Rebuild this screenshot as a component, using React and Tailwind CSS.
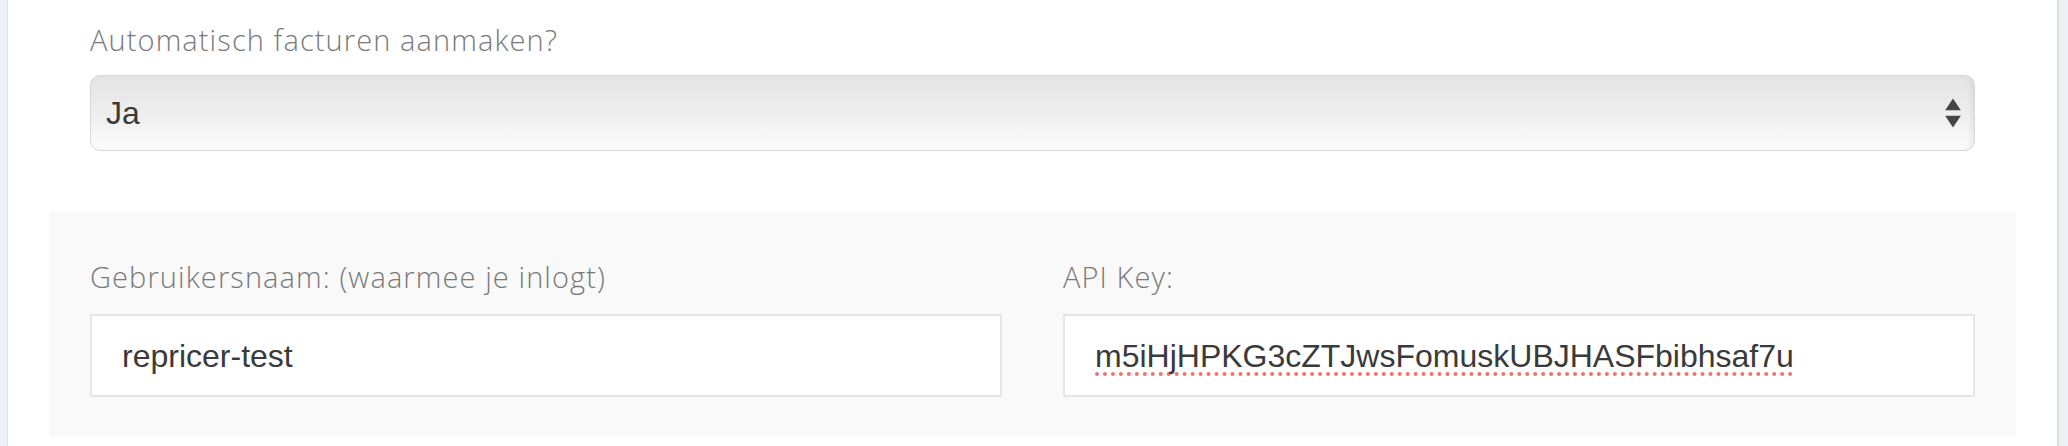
import React from 'react';

const labelCls =
  "h-[40px] leading-[40px] text-[29px] font-light text-[#7a7a7a] tracking-[1.1px] [font-family:'Open_Sans',Lato,sans-serif]";

function Field({ label, value, spell }) {
  return (
    <div className="flex flex-col">
      <label className={`${labelCls} mb-[17px]`}>{label}</label>
      <div className="h-[83px] border-2 border-[#e6e6e6] bg-white flex items-center pl-[30px]">
        <span
          className={`text-[32px] text-[#3a3a3a] [font-family:'Liberation_Sans',Arial,sans-serif] ${
            spell
              ? 'underline decoration-dotted decoration-[#f0736a] decoration-[4px] underline-offset-[6px] [text-decoration-skip-ink:none]'
              : ''
          }`}
        >
          {value}
        </span>
      </div>
    </div>
  );
}

export default function App() {
  return (
    <div className="w-[2068px] h-[446px] flex bg-white overflow-hidden">
      {/* linker rand */}
      <div className="w-[8px] bg-[#edf1f5] border-r border-[#dde3e9]" />

      <div className="flex-1 px-[41px] pt-[20px]">
        <div className="px-[41px]">
          <div className={`${labelCls} mb-[15px]`}>Automatisch facturen aanmaken?</div>

          <div className="relative h-[76px] rounded-[10px] border border-[#d8d8d8] bg-gradient-to-b from-[#e4e4e4] via-[#eeeeee] to-[#fcfcfc] shadow-[inset_-6px_0_6px_-4px_rgba(0,0,0,0.08)] flex items-center pl-[15px]">
            <span className="text-[32px] text-[#3a3a3a] [font-family:'Liberation_Sans',Arial,sans-serif]">Ja</span>
            <div className="absolute right-[13px] top-1/2 -translate-y-1/2 flex flex-col items-center gap-[5px]">
              <svg width="16" height="12" viewBox="0 0 16 12">
                <path d="M8 0 L16 12 L0 12 Z" fill="#454545" />
              </svg>
              <svg width="16" height="12" viewBox="0 0 16 12">
                <path d="M0 0 L16 0 L8 12 Z" fill="#454545" />
              </svg>
            </div>
          </div>
        </div>

        <div className="mt-[61px] bg-[#f9f9f9] px-[41px] pt-[45px] pb-[40px] grid grid-cols-2 gap-x-[61px]">
          <Field label="Gebruikersnaam: (waarmee je inlogt)" value="repricer-test" />
          <Field label="API Key:" value="m5iHjHPKG3cZTJwsFomuskUBJHASFbibhsaf7u" spell />
        </div>
      </div>

      {/* rechter rand */}
      <div className="w-[11px] bg-[#eef2f6] border-l-2 border-[#d9dee4]" />
    </div>
  );
}
